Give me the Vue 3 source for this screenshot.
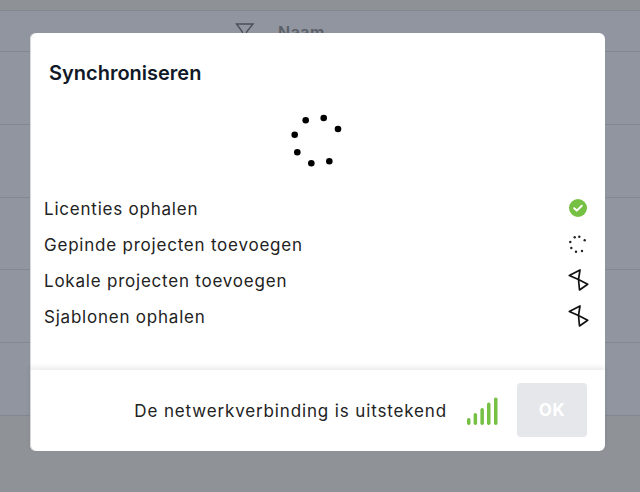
<script setup>
const rows = [
  { label: 'Licenties ophalen', state: 'done' },
  { label: 'Gepinde projecten toevoegen', state: 'busy' },
  { label: 'Lokale projecten toevoegen', state: 'wait' },
  { label: 'Sjablonen ophalen', state: 'wait' },
]
const spinner = [
  [33.7, 4], [48, 15], [15.7, 6.3], [4.7, 20.7], [7.3, 38.3], [21.3, 49.3], [39.3, 47.3],
]
const small = [
  [7.7, 4.3], [12.3, 3.7], [17.7, 7.3], [3.3, 9], [4.3, 15], [9, 18.7], [15, 18],
]
const bars = [
  [1, 7], [7.6, 12], [14.4, 17], [21, 22.500], [28, 27.500],
]
</script>

<template>
  <div class="page">
    <div class="head">
      <svg class="filter" width="20" height="20" viewBox="0 0 20 20" fill="none">
        <path d="M1.500 2h16.500l-6.500 8v7l-4-2.500V10z" stroke="#4b5159" stroke-width="1.400" />
      </svg>
      <span class="name">Naam</span>
    </div>
    <div class="line" v-for="n in 5" :key="n"></div>
    <div class="rest"></div>
    <div class="modal">
      <h1 class="title">Synchroniseren</h1>
      <svg class="spinner" width="52" height="54" viewBox="0 0 52 54">
        <circle v-for="(p, i) in spinner" :key="i" :cx="p[0]" :cy="p[1]" r="3.300" fill="#000" />
      </svg>
      <ul class="rows">
        <li v-for="row in rows" :key="row.label" class="row">
          <span class="label">{{ row.label }}</span>
          <span class="slot">
            <svg v-if="row.state === 'done'" width="18" height="18" viewBox="0 0 18 18">
              <circle cx="9" cy="9" r="9" fill="#76c043" />
              <path d="M5.200 9.200l2.600 2.400 5-4.800" fill="none" stroke="#fff" stroke-width="2" stroke-linecap="round" stroke-linejoin="round" />
            </svg>
            <svg v-else-if="row.state === 'busy'" width="22" height="22" viewBox="0 0 22 22">
              <circle v-for="(p, i) in small" :key="i" :cx="p[0]" :cy="p[1]" r="1.200" fill="#222" />
            </svg>
            <svg v-else width="22" height="24" viewBox="0 0 22 24" fill="none">
              <path d="M2.300 7.500L13 2 11.500 11.500 12.500 22 20.700 16.300 11.500 11.500z" stroke="#111" stroke-width="1.700" stroke-linejoin="round" />
            </svg>
          </span>
        </li>
      </ul>
      <div class="footer">
        <span class="status">De netwerkverbinding is uitstekend</span>
        <svg class="signal" width="32" height="28" viewBox="0 0 32 28">
          <rect v-for="(b, i) in bars" :key="i" :x="b[0]" :y="28 - b[1]" width="3.500" :height="b[1]" rx="1.700" fill="#76c043" />
        </svg>
        <button class="ok" type="button">OK</button>
      </div>
    </div>
  </div>
</template>

<style>
html, body { margin: 0; padding: 0; }
</style>

<style scoped>
.page {
  position: relative;
  width: 640px;
  height: 492px;
  overflow: hidden;
  padding-top: 10px;
  box-sizing: border-box;
  background: #8e9297;
  font-family: Inter, "Liberation Sans", sans-serif;
}
.head {
  height: 41px;
  border-top: 1px solid #83888f;
  background: #90959f;
  display: flex;
  align-items: flex-start;
  gap: 23px;
  padding: 11px 0 0 235px;
  box-sizing: border-box;
}
.filter { flex: none; }
.name {
  font-size: 16px;
  font-weight: 600;
  letter-spacing: 0.5px;
  color: #5b6068;
  line-height: 20px;
}
.line {
  height: 72.8px;
  border-top: 1px solid #83888f;
  background: #90959f;
  box-sizing: border-box;
}
.rest { border-top: 1px solid #83888f; background: #8f9398; height: 77px; box-sizing: border-box; }
.modal {
  position: absolute;
  left: 30px;
  top: 33px;
  width: 575px;
  height: 418px;
  background: #fff;
  border-radius: 6px;
  box-shadow: inset 1px 0 0 #d5d7da;
  display: flex;
  flex-direction: column;
}
.title {
  margin: 0;
  padding: 28px 0 0 19px;
  font-size: 20px;
  line-height: 25px;
  font-weight: 600;
  color: #111827;
}
.spinner { display: block; margin: 28px 0 0 260px; }
.rows { list-style: none; margin: 0; padding: 22px 16px 0 14px; }
.row {
  height: 36px;
  display: flex;
  align-items: center;
  justify-content: space-between;
  font-size: 17px;
  letter-spacing: 0.78px;
  color: #222;
}
.label { padding-top: 2px; }
.slot { width: 22px; display: flex; justify-content: center; }
.footer {
  margin-top: auto;
  height: 81px;
  box-shadow: 0 -3px 5px rgba(0, 0, 0, 0.08);
  display: flex;
  align-items: center;
  justify-content: flex-end;
  padding-right: 18px;
}
.status { font-size: 17px; letter-spacing: 0.86px; color: #222; margin-right: 19px; }
.signal { margin-right: 19px; }
.ok {
  width: 70px;
  height: 54px;
  margin-bottom: 1px;
  border: 0;
  border-radius: 4px;
  background: #e5e7eb;
  color: #fff;
  font-family: inherit;
  font-weight: 700;
  font-size: 17px;
  letter-spacing: 0.5px;
}
</style>
